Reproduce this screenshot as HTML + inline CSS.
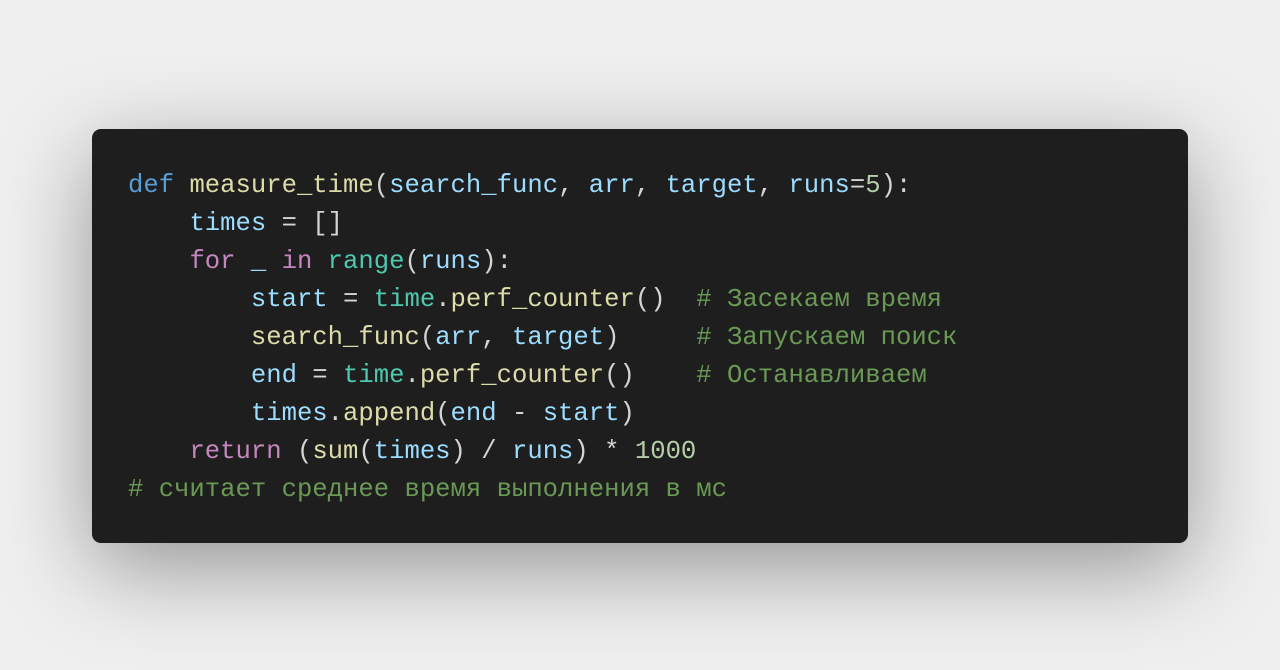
<!DOCTYPE html>
<html><head><meta charset="utf-8"><style>
html,body{margin:0;padding:0;width:1280px;height:670px;background:#efefef;overflow:hidden}
.box{position:absolute;left:92px;top:129px;width:1096px;height:414px;background:#1e1e1e;border-radius:9px;box-shadow:0 25px 90px rgba(0,0,0,0.38)}
pre{margin:0;position:absolute;left:36px;top:38px;font-family:"Liberation Mono","DejaVu Sans Mono",monospace;font-size:25.6px;line-height:38px;color:#d4d4d4}
.k{color:#569cd6}.f{color:#dcdcaa}.v{color:#9cdcfe}.c{color:#c586c0}.b{color:#4ec9b0}.n{color:#b5cea8}.m{color:#6a9955}
</style></head><body>
<div class="box"><pre><span class="k">def</span> <span class="f">measure_time</span>(<span class="v">search_func</span>, <span class="v">arr</span>, <span class="v">target</span>, <span class="v">runs</span>=<span class="n">5</span>):
    <span class="v">times</span> = []
    <span class="c">for</span> <span class="v">_</span> <span class="c">in</span> <span class="b">range</span>(<span class="v">runs</span>):
        <span class="v">start</span> = <span class="b">time</span>.<span class="f">perf_counter</span>()  <span class="m"># Засекаем время</span>
        <span class="f">search_func</span>(<span class="v">arr</span>, <span class="v">target</span>)     <span class="m"># Запускаем поиск</span>
        <span class="v">end</span> = <span class="b">time</span>.<span class="f">perf_counter</span>()    <span class="m"># Останавливаем</span>
        <span class="v">times</span>.<span class="f">append</span>(<span class="v">end</span> - <span class="v">start</span>)
    <span class="c">return</span> (<span class="f">sum</span>(<span class="v">times</span>) / <span class="v">runs</span>) * <span class="n">1000</span>
<span class="m"># считает среднее время выполнения в мс</span></pre></div>
</body></html>
